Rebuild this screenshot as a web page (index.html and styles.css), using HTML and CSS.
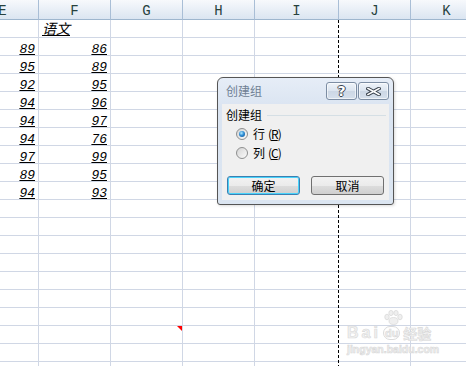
FILE: index.html
```html
<!DOCTYPE html>
<html lang="zh-CN">
<head>
  <meta charset="UTF-8" />
  <meta name="viewport" content="width=device-width, initial-scale=1.0"/>
  <title>创建组</title>
  <link rel="stylesheet" href="styles.css">
</head>
<body>
  <div class="sheet" id="sheet">
    <div class="heads">
      <div>E</div><div>F</div><div>G</div><div>H</div><div>I</div><div>J</div><div>K</div>
    </div>
  </div>

  <div class="pagebreak"></div>

  <div class="watermark">
    <svg class="paw" width="22" height="15" viewBox="0 0 22 15">
      <ellipse cx="5" cy="7" rx="2.2" ry="2.8" />
      <ellipse cx="9" cy="3" rx="2.2" ry="2.6" />
      <ellipse cx="14" cy="3" rx="2.2" ry="2.6" />
      <ellipse cx="18" cy="7" rx="2.2" ry="2.8" />
      <ellipse cx="11.5" cy="11" rx="4.5" ry="3.5" />
    </svg>
    <div class="wm-logo"><b>Bai</b><span class="du">du</span><span class="jy">经验</span></div>
    <div class="wm-url">jingyan.baidu.com</div>
  </div>

  <div class="dlg">
    <div class="dlg-title">
      <span class="dlg-name">创建组</span>
      <div class="caption-btns">
        <span class="cap help">?</span>
        <span class="cap close">
          <svg width="15" height="9" viewBox="0 0 15 9">
            <path d="M2 1.5 L13 7.5 M13 1.5 L2 7.5" stroke="#3c4550" stroke-width="3.6" stroke-linecap="square" />
            <path d="M2 1.5 L13 7.5 M13 1.5 L2 7.5" stroke="#fff" stroke-width="1.6" stroke-linecap="square" />
          </svg>
        </span>
      </div>
    </div>
    <div class="dlg-body">
      <div class="group"><span>创建组</span><i class="rule"></i></div>
      <label class="radio on"><span class="dot"></span>行 <span class="key">(<u>R</u>)</span></label>
      <label class="radio"><span class="dot"></span>列 <span class="key">(<u>C</u>)</span></label>
      <div class="actions">
        <button class="btn default">确定</button>
        <button class="btn">取消</button>
      </div>
    </div>
  </div>

  <script>
    // Scores in columns E and F
    const scores = [[89, 86], [95, 89], [92, 95], [94, 96], [94, 97], [94, 76], [97, 99], [89, 95], [94, 93]];
    const sheet = document.getElementById("sheet");

    for (let r = 0; r < 20; r++) {
      const row = document.createElement("div");
      row.className = "row";
      for (let c = 0; c < 7; c++) {
        const cell = document.createElement("div");
        cell.className = "cell";
        if (r === 0 && c === 1) {
          cell.classList.add("label");
          cell.textContent = "语文";
        }
        if (r >= 1 && r <= 9 && c < 2) {
          cell.classList.add("num");
          cell.textContent = scores[r - 1][c];
        }
        if (r === 17 && c === 2) cell.classList.add("comment");
        row.appendChild(cell);
      }
      sheet.appendChild(row);
    }
  </script>
</body>
</html>
```

FILE: styles.css
```css
* {
  margin: 0;
  padding: 0;
  box-sizing: border-box;
}

body {
  width: 466px;
  height: 366px;
  overflow: hidden;
  position: relative;
  background: #fff;
  font-family: "Noto Sans CJK SC", sans-serif;
  font-size: 12px;
  color: #000;
}

/* spreadsheet grid */
.sheet {
  margin-left: -33px;
}

.heads,
.row {
  display: grid;
  grid-template-columns: 72px 72px 72px 72px 84px 72px 72px;
}

.heads div {
  height: 20px;
  padding-top: 3px;
  border-right: 1px solid #a9bed6;
  border-bottom: 1px solid #9eb6ce;
  background: linear-gradient(#f7f9fc, #dbe5f1);
  text-align: center;
  font: 14px/17px "Liberation Mono", monospace;
  color: #27413e;
}

.cell {
  height: 18px;
  border-right: 1px solid #d0d7e5;
  border-bottom: 1px solid #d0d7e5;
  position: relative;
}

.row .cell:nth-child(5) {
  border-right-color: #fff;
}

.num {
  padding: 3px 3px 0 0;
  text-align: right;
  font: italic 13px/17px "Liberation Mono", monospace;
  text-decoration: underline;
}

.label {
  padding-left: 3px;
  font: italic 14px/17px "Noto Sans CJK SC", sans-serif;
  text-decoration: underline;
}

.comment::after {
  content: "";
  position: absolute;
  top: 0;
  right: 0;
  border-top: 5px solid #f00;
  border-left: 5px solid transparent;
}

.pagebreak {
  position: absolute;
  left: 338px;
  top: 20px;
  bottom: 0;
  width: 1px;
  background: repeating-linear-gradient(#000 0 3px, transparent 3px 5px);
}

/* baidu watermark */
.watermark {
  position: absolute;
  left: 347px;
  top: 310px;
  width: 95px;
  color: #f1f1f1;
  -webkit-text-stroke: 0.6px #d9d9d9;
}

.paw {
  display: block;
  margin-left: 35px;
  fill: #efefef;
  stroke: #d9d9d9;
  stroke-width: 0.8;
}

.wm-logo {
  display: flex;
  align-items: center;
  height: 16px;
  font-family: "Liberation Sans", sans-serif;
}

.wm-logo b {
  font-size: 16px;
  letter-spacing: 3px;
}

.du {
  margin-left: 2px;
  padding: 0 1px;
  border: 1px solid #dadada;
  border-radius: 7px;
  font-size: 11px;
  font-weight: bold;
  line-height: 12px;
}

.jy {
  margin-left: 3px;
  font: bold 14px "Noto Sans CJK SC", sans-serif;
}

.wm-url {
  margin-top: 2px;
  font: bold 10.5px/13px "Liberation Sans", sans-serif;
}

/* dialog */
.dlg {
  position: absolute;
  left: 217px;
  top: 77px;
  width: 177px;
  height: 128px;
  border: 1px solid #555;
  border-radius: 6px 6px 3px 3px;
  background: linear-gradient(#e6edf7, #dae4f1 30px, #dbe5f1);
  box-shadow: 1px 1px 3px rgba(0,0,0,0.15);
  display: flex;
  flex-direction: column;
}

.dlg-title {
  height: 26px;
  display: flex;
  justify-content: space-between;
  padding: 4px 4px 0 8px;
}

.dlg-name {
  line-height: 18px;
  color: #6f7f93;
}

.caption-btns {
  display: flex;
  gap: 1px;
}

.cap {
  width: 31px;
  height: 18px;
  border: 1px solid #7c8da3;
  border-radius: 3px;
  background: linear-gradient(#eef3f9, #dbe4ef 50%, #ccd7e5 51%, #d6e0ec);
  box-shadow: inset 0 0 0 1px rgba(255,255,255,0.6);
  display: flex;
  align-items: center;
  justify-content: center;
}

.help {
  font: bold 14px/1 "DejaVu Sans", sans-serif;
  color: #fff;
  text-shadow: 1px 0 #3c4550, -1px 0 #3c4550, 0 1px #3c4550, 0 -1px #3c4550;
}

.dlg-body {
  flex: 1;
  margin: 0 4px 4px;
  background: #f0f0f0;
}

.group {
  display: flex;
  align-items: center;
  height: 20px;
  padding: 0 3px 0 4px;
}

.rule {
  flex: 1;
  height: 1px;
  margin: 2px 0 0 5px;
  background: #d5dfe5;
}

.radio {
  display: flex;
  align-items: center;
  gap: 5px;
  height: 19px;
  padding-left: 14px;
}

.key {
  margin-left: -2px;
  letter-spacing: -1px;
}

.dot {
  width: 12px;
  height: 12px;
  border: 1px solid #8e8f8f;
  border-radius: 50%;
  background: linear-gradient(135deg, #d4d4d4, #fbfbfb);
  display: flex;
  align-items: center;
  justify-content: center;
}

.radio.on .dot::after {
  content: "";
  width: 6px;
  height: 6px;
  border-radius: 50%;
  background: radial-gradient(circle at 40% 35%, #b4ecff 0, #2f8ed6 45%, #0e4a86 100%);
}

.actions {
  display: flex;
  gap: 11px;
  margin-top: 14px;
  padding-left: 5px;
}

.btn {
  width: 73px;
  height: 19px;
  border: 1px solid #707070;
  border-radius: 3px;
  background: linear-gradient(#f2f2f2, #ebebeb 50%, #dddddd 51%, #cfcfcf);
  font: 12px/1 "Noto Sans CJK SC", sans-serif;
  color: #000;
}

.btn.default {
  border-color: #3c7fb1;
  box-shadow: inset 0 0 0 1px #48d3fb;
}
```
